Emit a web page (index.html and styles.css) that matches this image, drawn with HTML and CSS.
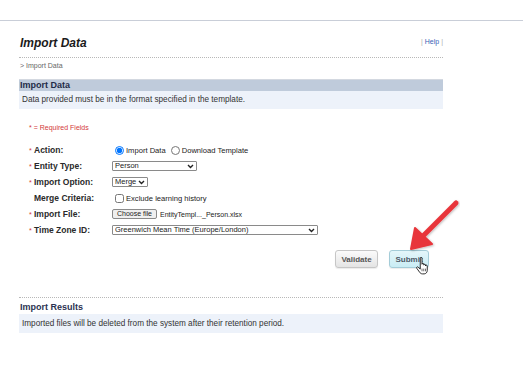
FILE: index.html
```html
<!DOCTYPE html>
<html lang="en">
<head>
    <meta charset="UTF-8">
    <meta name="viewport" content="width=device-width, initial-scale=1.0">
    <title>Import Data</title>
    <link rel="stylesheet" href="styles.css">
</head>
<body>
    <div class="topbar"></div>
    <div class="page">
        <div class="title-row">
            <h1 class="page-title">Import Data</h1>
            <div class="help"><span class="sep">|</span> <a href="#">Help</a> <span class="sep">|</span></div>
        </div>
        <div class="breadcrumb">&gt; Import Data</div>

        <div class="section-head">Import Data</div>
        <div class="section-note">Data provided must be in the format specified in the template.</div>

        <p class="required-note">* = Required Fields</p>

        <form class="import-form">
            <div class="form-row">
                <label class="field-label"><span class="req">*</span>Action:</label>
                <div class="field">
                    <label class="choice"><input type="radio" name="action" checked>Import Data</label>
                    <label class="choice"><input type="radio" name="action">Download Template</label>
                </div>
            </div>
            <div class="form-row">
                <label class="field-label"><span class="req">*</span>Entity Type:</label>
                <div class="field">
                    <span class="select select-entity">
                        <select><option>Person</option></select>
                        <svg width="7" height="5" viewBox="0 0 7 5"><path d="M1 1 L3.5 3.5 L6 1" fill="none" stroke="#222" stroke-width="1.4"/></svg>
                    </span>
                </div>
            </div>
            <div class="form-row">
                <label class="field-label"><span class="req">*</span>Import Option:</label>
                <div class="field">
                    <span class="select select-option">
                        <select><option>Merge</option></select>
                        <svg width="7" height="5" viewBox="0 0 7 5"><path d="M1 1 L3.5 3.5 L6 1" fill="none" stroke="#222" stroke-width="1.4"/></svg>
                    </span>
                </div>
            </div>
            <div class="form-row">
                <label class="field-label"><span class="req"></span>Merge Criteria:</label>
                <div class="field">
                    <label class="choice"><input type="checkbox">Exclude learning history</label>
                </div>
            </div>
            <div class="form-row">
                <label class="field-label"><span class="req">*</span>Import File:</label>
                <div class="field">
                    <button type="button" class="file-btn">Choose file</button>
                    <span class="file-name">EntityTempl..._Person.xlsx</span>
                </div>
            </div>
            <div class="form-row">
                <label class="field-label"><span class="req">*</span>Time Zone ID:</label>
                <div class="field">
                    <span class="select select-tz">
                        <select><option>Greenwich Mean Time (Europe/London)</option></select>
                        <svg width="7" height="5" viewBox="0 0 7 5"><path d="M1 1 L3.5 3.5 L6 1" fill="none" stroke="#222" stroke-width="1.4"/></svg>
                    </span>
                </div>
            </div>
        </form>

        <div class="actions">
            <button type="button" class="btn">Validate</button>
            <button type="button" class="btn btn-submit">Submit</button>
        </div>

        <div class="results-head">Import Results</div>
        <div class="section-note results-note">Imported files will be deleted from the system after their retention period.</div>
    </div>

    <!-- annotation arrow + mouse pointer drawn over the page -->
    <svg class="arrow" width="60" height="60" viewBox="400 195 60 60">
        <g filter="url(#shade)">
            <line x1="456" y1="203" x2="421" y2="238" stroke="#e8363b" stroke-width="5" stroke-linecap="round"/>
            <polygon points="411,249 415,228 432,244" fill="#e8363b" stroke="#e8363b" stroke-width="2" stroke-linejoin="round"/>
        </g>
        <defs>
            <filter id="shade" x="-20%" y="-20%" width="140%" height="140%">
                <feDropShadow dx="1" dy="1" stdDeviation="1" flood-color="#000" flood-opacity="0.25"/>
            </filter>
        </defs>
    </svg>
    <svg class="cursor" width="14" height="18" viewBox="0 0 16 20">
        <path d="M6 1.2 a1 1 0 0 1 2 0 V8 a1 1 0 0 1 2 0 V9 a1 1 0 0 1 2 0 V10 a1 1 0 0 1 2 0 V15 c0 2.2 -1.5 4 -3.5 4 H8.5 c-1.5 0 -2.5 -0.8 -3.3 -2 L2 12.6 a1 1 0 0 1 1.6 -1.2 L6 13.5 Z" fill="#fff" stroke="#111" stroke-width="1"/>
        <path d="M8 13 V16 M10 13 V16 M12 13 V16" stroke="#111" stroke-width="0.7"/>
    </svg>
</body>
</html>
```

FILE: styles.css
```css
body {
    font-family: "Liberation Sans", Arial, sans-serif;
    margin: 0;
    background: #fff;
    color: #222;
    position: relative;
    height: 387px;
    overflow: hidden;
}
.topbar {
    height: 20px;
    border-bottom: 1px solid #c9ced8;
}
.page {
    margin-left: 19px;
    width: 424px;
}
.title-row {
    display: flex;
    justify-content: space-between;
    align-items: center;
    padding: 15px 0 6px;
    border-bottom: 1px dotted #b8b8b8;
}
.page-title {
    margin: 0;
    padding-left: 1px;
    font-size: 12px;
    line-height: 15px;
    font-style: italic;
    font-weight: bold;
    color: #1b1b1b;
}
.help {
    font-size: 7px;
    color: #aaa;
    margin-top: -5px;
}
.help a {
    color: #3b62b5;
    text-decoration: none;
}
.breadcrumb {
    font-size: 7px;
    line-height: 12px;
    padding: 2px 0 7px 1px;
    color: #666;
    border-bottom: 1px solid #d3d8e0;
}
.section-head {
    background: #bfcbdb;
    height: 11px;
    line-height: 11px;
    font-size: 9px;
    font-weight: bold;
    color: #1f2b48;
    padding-left: 1px;
}
.section-note {
    background: #edf2fa;
    height: 18px;
    line-height: 18px;
    font-size: 8.2px;
    padding-left: 3px;
    color: #333;
}
.required-note {
    margin: 14px 0 0;
    padding-left: 10px;
    font-size: 7px;
    line-height: 10px;
    color: #d33a3a;
}
.import-form {
    margin-top: 9px;
    padding-left: 10px;
}
.form-row {
    display: grid;
    grid-template-columns: 83px 1fr;
    align-items: center;
    height: 16px;
}
.field-label {
    font-size: 8.5px;
    font-weight: bold;
    color: #2a2a2a;
}
.req {
    display: inline-block;
    width: 5px;
    color: #d33a3a;
    font-size: 7px;
    font-weight: normal;
}
.field {
    display: flex;
    align-items: center;
    font-size: 7.6px;
    color: #222;
}
.choice {
    display: inline-flex;
    align-items: center;
    margin-right: 2px;
}
.choice input {
    width: 9px;
    height: 9px;
    margin: 0 2px 0 3px;
}
.select {
    display: inline-flex;
    align-items: center;
    height: 10px;
    box-sizing: border-box;
    border: 1px solid #8a8a8a;
    border-radius: 1px;
    background: #fff;
}
.select select {
    appearance: none;
    border: 0;
    background: transparent;
    font-family: inherit;
    font-size: 7.5px;
    color: #222;
    padding: 0 0 0 2px;
    height: 8px;
    line-height: 8px;
    flex: 1;
    min-width: 0;
    outline: none;
}
.select svg {
    flex: none;
    margin-right: 2px;
}
.select-entity {
    width: 85px;
}
.select-option {
    width: 36px;
}
.select-tz {
    width: 206px;
}
.file-btn {
    font-family: inherit;
    font-size: 7px;
    height: 10px;
    width: 45px;
    padding: 0;
    line-height: 8px;
    background: #efefef;
    border: 1px solid #8a8a8a;
    border-radius: 2px;
    color: #222;
}
.file-name {
    font-size: 7px;
    margin-left: 3px;
}
.actions {
    display: flex;
    justify-content: flex-end;
    gap: 11px;
    margin-top: 12px;
    padding-right: 14px;
}
.btn {
    font-family: inherit;
    font-size: 8px;
    font-weight: bold;
    color: #555;
    height: 18px;
    width: 43px;
    padding: 0;
    border: 1px solid #c6c6c6;
    border-radius: 3px;
    background: linear-gradient(#fbfbfb, #e4e4e4);
    box-shadow: 0 1px 1px rgba(0, 0, 0, 0.08);
}
.btn-submit {
    width: 40px;
    color: #4d5866;
    border-color: #a4ccd8;
    background: linear-gradient(#e4f6fa, #c9ecf4);
}
.results-head {
    margin-top: 29px;
    border-top: 1px dotted #b8b8b8;
    height: 16px;
    line-height: 19px;
    font-size: 9px;
    font-weight: bold;
    color: #2b3352;
    padding-left: 1px;
}
.results-note {
    height: 19px;
    line-height: 19px;
}
.arrow {
    position: absolute;
    left: 400px;
    top: 195px;
}
.cursor {
    position: absolute;
    left: 415px;
    top: 257px;
}
```
